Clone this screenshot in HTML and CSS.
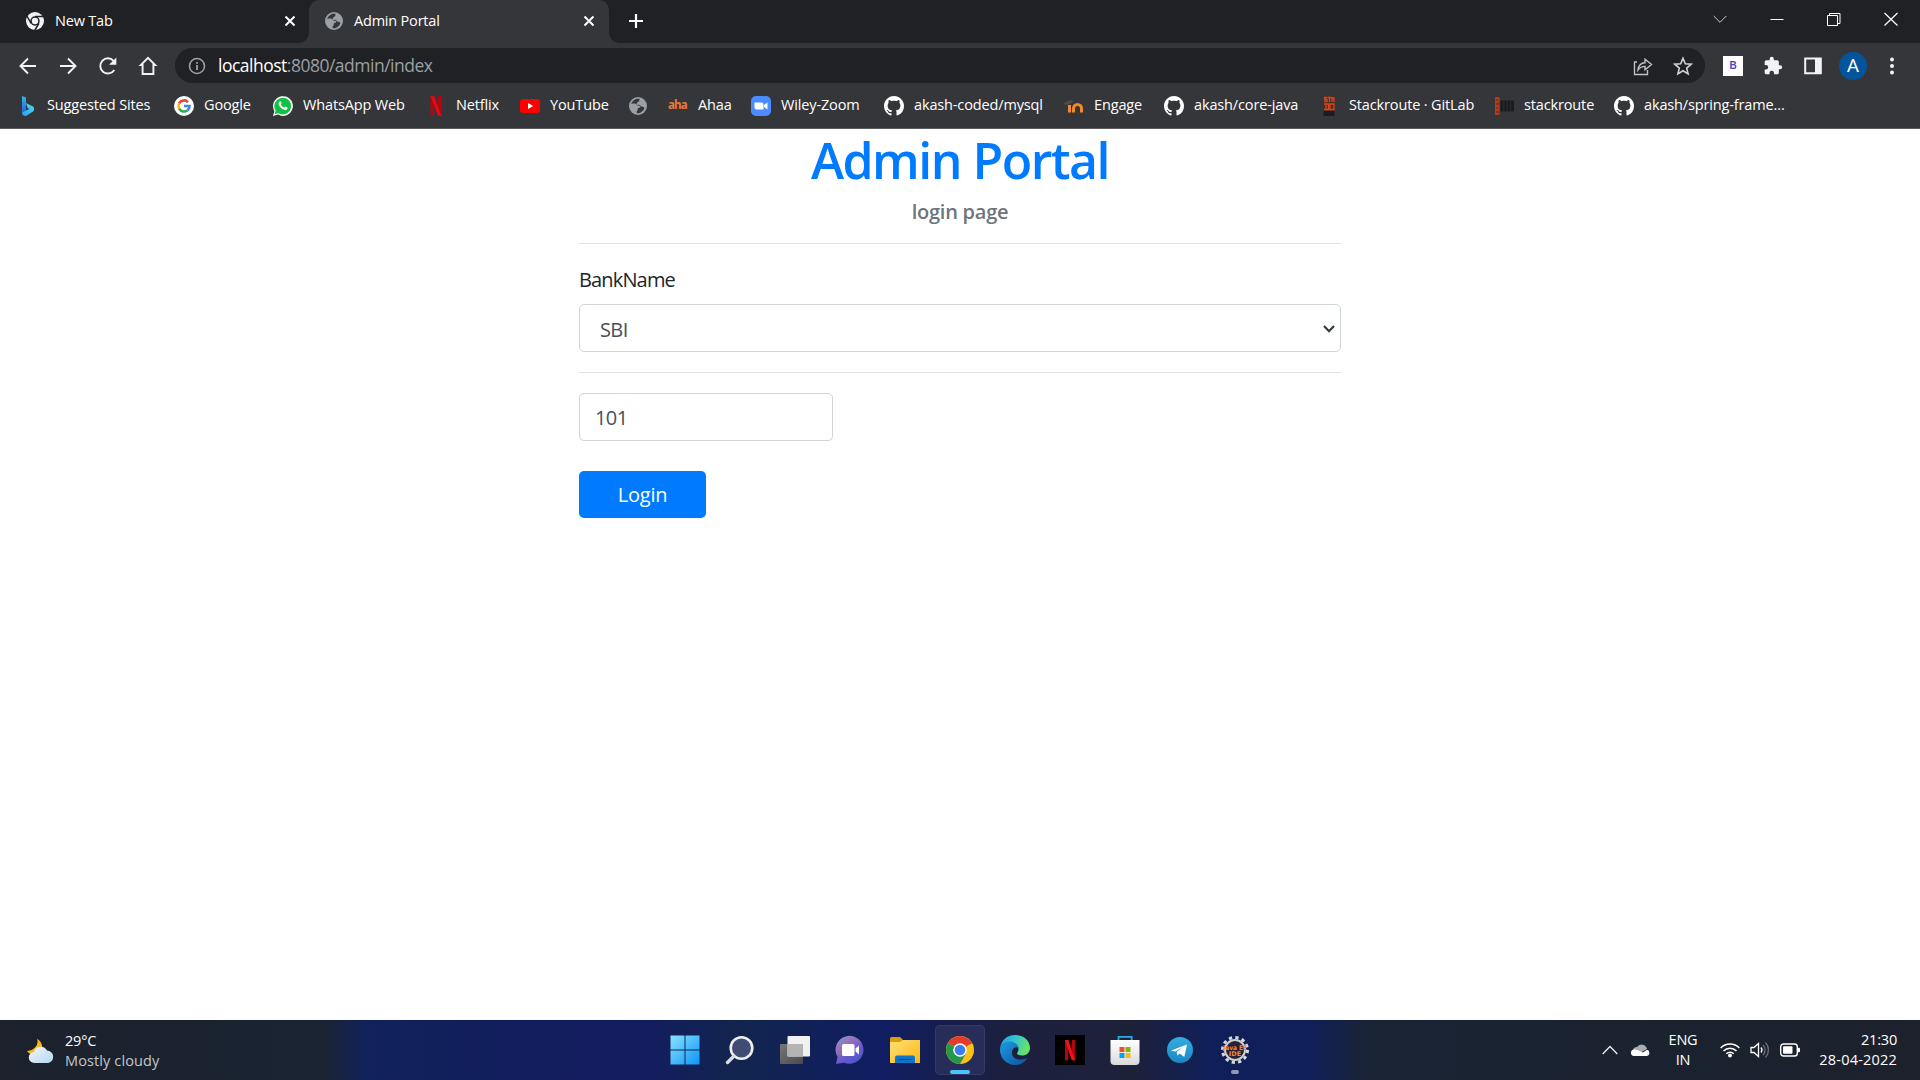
FILE: index.html
```html
<!DOCTYPE html>
<html lang="en">
<head>
<meta charset="utf-8">
<title>Admin Portal</title>
<link rel="stylesheet" href="styles.css">
</head>
<body>
<svg width="0" height="0" class="defs">
  <defs>
    <symbol id="github" viewBox="0 0 16 16"><path fill="#fff" d="M8 0C3.58 0 0 3.58 0 8c0 3.54 2.29 6.53 5.47 7.59.4.07.55-.17.55-.38 0-.19-.01-.82-.01-1.49-2.01.37-2.53-.49-2.69-.94-.09-.23-.48-.94-.82-1.13-.28-.15-.68-.52-.01-.53.63-.01 1.08.58 1.23.82.72 1.21 1.87.87 2.33.66.07-.52.28-.87.51-1.07-1.78-.2-3.64-.89-3.64-3.95 0-.87.31-1.59.82-2.15-.08-.2-.36-1.02.08-2.12 0 0 .67-.21 2.2.82.64-.18 1.32-.27 2-.27s1.36.09 2 .27c1.53-1.04 2.2-.82 2.2-.82.44 1.1.16 1.92.08 2.12.51.56.82 1.27.82 2.15 0 3.07-1.87 3.75-3.65 3.95.29.25.54.73.54 1.48 0 1.07-.01 1.93-.01 2.2 0 .21.15.46.55.38A8.01 8.01 0 0 0 16 8c0-4.42-3.58-8-8-8z"/></symbol>
    <symbol id="globe" viewBox="0 0 20 20"><circle cx="10" cy="10" r="9" fill="#9aa0a6"/><path fill="#35363a" d="M11.5 2.8C8 2.2 4.300 4.400 3.200 7.700c1.500.2 2.800-.5 4.300.1 1.200.5 1.300 1.700 2.700 1.900.9.1 1.800 0 2.100.8.2 1-.8 1.300-1.800 1.400-.8.100-.7 1.200-.9 2.100-.1.900-.9 1.100-1 2.100 0 .5.100.9.4 1.200 3.300.1 6.500-2.300 7.400-5.400-.8-.600-1.500-1.200-2.500-1.300-1.100-.200-1.300-1.400-2.400-1.700-1-.2-2.300.4-2.800-.6-.4-1 .4-1.700 1.300-2.200 1-.6 1.700-1.800 1.500-3.300z"/></symbol>
    <symbol id="close" viewBox="0 0 12 12"><path d="M1.500 1.500l9 9M10.500 1.500l-9 9" stroke="#fff" stroke-width="2" fill="none"/></symbol>
    <linearGradient id="bing" x1="0" y1="0" x2="0" y2="1"><stop offset="0" stop-color="#2fb7f4"/><stop offset="1" stop-color="#1b62e0"/></linearGradient>
    <linearGradient id="bing2" x1="0" y1="1" x2="1" y2="0"><stop offset="0" stop-color="#2a9bf0"/><stop offset="1" stop-color="#4be3e8"/></linearGradient>
    <linearGradient id="win" gradientUnits="userSpaceOnUse" x1="0" y1="0" x2="30" y2="30"><stop offset="0" stop-color="#8be4ff"/><stop offset="1" stop-color="#0a93f8"/></linearGradient>
    <linearGradient id="chat" x1="0" y1="0" x2=".7" y2="1"><stop offset="0" stop-color="#6fa0dc"/><stop offset=".35" stop-color="#9a73b8"/><stop offset=".7" stop-color="#6259cc"/><stop offset="1" stop-color="#5058c8"/></linearGradient>
    <linearGradient id="folder" x1="0" y1="0" x2="1" y2="1"><stop offset="0" stop-color="#ffe07a"/><stop offset="1" stop-color="#fbb80f"/></linearGradient>
    <linearGradient id="edgeTop" x1="0" y1="0" x2="1" y2=".3"><stop offset="0" stop-color="#1c9ee0"/><stop offset=".5" stop-color="#32c3d8"/><stop offset="1" stop-color="#66e26a"/></linearGradient>
    <linearGradient id="edgeLow" x1="0" y1="0" x2="1" y2="1"><stop offset="0" stop-color="#1b9de2"/><stop offset="1" stop-color="#0f4f9e"/></linearGradient>
    <linearGradient id="bag" x1="0" y1="0" x2="0" y2="1"><stop offset="0" stop-color="#fff"/><stop offset="1" stop-color="#d9dadc"/></linearGradient>
    <linearGradient id="tele" x1="0" y1="0" x2="0" y2="1"><stop offset="0" stop-color="#35ade1"/><stop offset="1" stop-color="#1b87c4"/></linearGradient>
    <linearGradient id="cloud" x1="0" y1="0" x2="1" y2="1"><stop offset="0" stop-color="#f3f8fd"/><stop offset="1" stop-color="#b4d6ee"/></linearGradient>
    <linearGradient id="grey" x1="0" y1="0" x2="1" y2="1"><stop offset="0" stop-color="#777"/><stop offset="1" stop-color="#4a4a4a"/></linearGradient>
  </defs>
</svg>

<header class="tabs">
  <div class="tab">
    <svg class="fav" viewBox="0 0 20 20"><circle cx="10" cy="10" r="9" fill="#f1f3f4"/><circle cx="10" cy="10" r="4.700" fill="#202124"/><circle cx="10" cy="10" r="3.200" fill="#f1f3f4"/><path d="M10 5.500h8.500M6.100 12.300L1.900 5M13.900 12.300L9.700 19.500" stroke="#202124" stroke-width="1.500"/></svg>
    <span class="tab-title">New Tab</span>
    <svg class="x"><use href="#close"/></svg>
  </div>
  <div class="tab active">
    <svg class="fav"><use href="#globe"/></svg>
    <span class="tab-title">Admin Portal</span>
    <svg class="x"><use href="#close"/></svg>
  </div>
  <svg class="plus" viewBox="0 0 16 16"><path d="M8 1v14M1 8h14" stroke="#fff" stroke-width="2.200"/></svg>
  <div class="window-buttons">
    <svg viewBox="0 0 14 14"><path d="M.7 4l6.300 6.300L13.300 4" stroke="#ccc" fill="none"/></svg>
    <svg viewBox="0 0 14 14"><path d="M.5 7.500h13" stroke="#fff" fill="none"/></svg>
    <svg viewBox="0 0 14 14"><path d="M.5 3.500h10v10H.5zM2.500 3V1.500h10.500v10H11" stroke="#fff" fill="none"/></svg>
    <svg viewBox="0 0 14 14"><path d="M.5 1l13 12.500M13.500 1L.5 13.500" stroke="#fff" stroke-width="1.200" fill="none"/></svg>
  </div>
</header>

<nav class="toolbar">
  <div class="nav-icons">
    <svg viewBox="0 0 20 20"><path d="M18 10H2.500M10 2.500L2.500 10l7.500 7.500" class="ln"/></svg>
    <svg viewBox="0 0 20 20"><path d="M2 10h15.500M10 2.500l7.500 7.500-7.500 7.500" class="ln"/></svg>
    <svg viewBox="0 0 20 20"><path d="M16.300 14A7.600 7.600 0 1 1 15.500 4.800L17 6.300" class="ln"/><path d="M18.300 1.500v7.200h-7.200z" fill="#f1f3f4"/></svg>
    <svg viewBox="0 0 20 20"><path d="M4.600 18V9H2.800L10 1.800 17.200 9h-1.800v9z" class="ln"/></svg>
  </div>
  <div class="omnibox">
    <svg class="info" viewBox="0 0 18 18"><circle cx="9" cy="9" r="7.500" fill="none" stroke="#9aa0a6" stroke-width="1.600"/><path d="M9 8v5M9 5v1.800" stroke="#9aa0a6" stroke-width="1.800"/></svg>
    <span class="url"><b>localhost</b>:8080/admin/index</span>
    <svg class="share" viewBox="0 0 20 20"><path d="M4 6H1.500v12.500h13V14M5 14c.5-4.500 3-7 7-7.200V3.200L18.500 8.500 12 13.700v-3.300c-3 0-5 1-7 3.600z" fill="none" stroke="#bdc1c6" stroke-width="1.400"/></svg>
    <svg class="star" viewBox="0 0 20 20"><path d="M10 2.200l2.300 5.500 6 .5-4.600 3.900 1.400 5.800L10 14.800l-5.100 3.100 1.400-5.800-4.600-3.900 6-.5z" fill="none" stroke="#d0d2d5" stroke-width="1.600"/></svg>
  </div>
  <div class="extensions">
    <span class="ext-b">B</span>
    <svg viewBox="0 0 24 24"><path fill="#f1f3f4" d="M20.500 11H19V7a2 2 0 0 0-2-2h-4V3.500a2.500 2.500 0 0 0-5 0V5H4a2 2 0 0 0-2 2v3.800h1.500a2.700 2.700 0 0 1 0 5.400H2V20a2 2 0 0 0 2 2h3.800v-1.500a2.700 2.700 0 0 1 5.400 0V22H17a2 2 0 0 0 2-2v-4h1.500a2.500 2.500 0 0 0 0-5z"/></svg>
    <svg viewBox="0 0 20 20"><path d="M2.200 2.500h15.600v14.800H2.200z" fill="none" stroke="#f1f3f4" stroke-width="2"/><path d="M12 2h6v15h-6z" fill="#f1f3f4"/></svg>
    <span class="avatar">A</span>
    <svg viewBox="0 0 20 20"><circle cx="10" cy="3.500" r="2" fill="#f1f3f4"/><circle cx="10" cy="10" r="2" fill="#f1f3f4"/><circle cx="10" cy="16.500" r="2" fill="#f1f3f4"/></svg>
  </div>
</nav>

<nav class="bookmarks">
  <a><svg viewBox="0 0 20 20"><path d="M4 0l4 1.500v13L4 17.500z" fill="url(#bing)"/><path d="M4 16.500l4-2 3.500-1.600-2-1L8 7l7 3.400q1 .6 1 2v1.400q0 1-1 1.700L8 20q-4 0-4-3.500z" fill="url(#bing2)"/></svg><span>Suggested Sites</span></a>
  <a><svg viewBox="0 0 20 20"><circle cx="10" cy="10" r="10" fill="#fff"/><g fill="none" stroke-width="2.600"><path d="M14 6.100A5.600 5.600 0 0 0 5.100 7.300" stroke="#ea4335"/><path d="M5.100 7.300a5.600 5.600 0 0 0 0 5.400" stroke="#fbbc05"/><path d="M5.100 12.700a5.600 5.600 0 0 0 8.500 1.500" stroke="#34a853"/><path d="M13.600 14.200A5.600 5.600 0 0 0 15.500 10H10" stroke="#4285f4"/></g></svg><span>Google</span></a>
  <a><svg viewBox="0 0 20 20"><path d="M0 20l1.400-5A9.900 9.900 0 1 1 5 18.600z" fill="#fff"/><path d="M1.700 18.300l1-3.500A8.400 8.400 0 1 1 5.300 17.300z" fill="#12c143"/><path d="M6.800 5.300c.5-.3 1-.2 1.200.3l.6 1.500c.1.500-.6 1-.7 1.400.8 1.500 1.800 2.500 3.400 3.100.5 0 .9-1.200 1.400-1.100l1.700.9c.7.700-.4 2.500-1.900 2.600-3.100-.2-6.600-3.700-6.900-6.300 0-1 .5-2 1.200-2.400z" fill="#fff"/></svg><span>WhatsApp Web</span></a>
  <a><svg viewBox="0 0 20 20"><path d="M4.500 0H8v20l-3.500.5zM12 0h3.500v20H12z" fill="#b1060f"/><path d="M4.500 0H8l7.500 20L12 19.700z" fill="#e50914"/></svg><span>Netflix</span></a>
  <a><svg viewBox="0 0 20 20"><rect y="3" width="20" height="14" rx="3.500" fill="#f00"/><path d="M8 7v6l5.200-3z" fill="#fff"/></svg><span>YouTube</span></a>
  <a><svg><use href="#globe"/></svg></a>
  <a><span class="aha">aha</span><span>Ahaa</span></a>
  <a><svg viewBox="0 0 20 20"><rect width="20" height="20" rx="5" fill="#4a8cff"/><path d="M3.500 6.500h7a2 2 0 0 1 2 2v5h-7a2 2 0 0 1-2-2zM13 9l3.500-2.500v7L13 11z" fill="#fff"/></svg><span>Wiley-Zoom</span></a>
  <a><svg><use href="#github"/></svg><span>akash-coded/mysql</span></a>
  <a><svg viewBox="0 0 20 20"><path d="M5.500 16.500V9M9.500 16.500v-4a3.600 3.600 0 0 1 8 0v4" stroke="#f08a2c" stroke-width="3" fill="none"/><path d="M0 7l6-3 4 1-4 3-5 1z" fill="#514b48"/></svg><span>Engage</span></a>
  <a><svg><use href="#github"/></svg><span>akash/core-java</span></a>
  <a><svg viewBox="0 0 20 20"><path d="M4.500 0h11v15h-11z" fill="#4a2b24"/><path d="M8 1.500H5.500v2H8v2H5M8.500 1.500h4M10.500 1.500v4.500M13 6V2h2v4M5 8h4.500v5.500H5M11 8h4v5.500h-4zM7 8v5" fill="none" stroke="#d9481c" stroke-width="1.300"/><path d="M4.500 15h11v5h-11z" fill="#1d1d1f"/></svg><span>Stackroute · GitLab</span></a>
  <a><svg viewBox="0 0 20 20"><path d="M1 1h4.500v18H1z" fill="#b63b19"/><path d="M2 4h2M2 8h3M2 12h2M2 16h3" stroke="#4a2b24"/><path d="M6.500 4.500h3v11h-3zM10.300 4.500h2.500v11h-2.500zM13.500 4.500h3v11h-3zM17.200 4.500H20v11h-2.800z" fill="#1b1b1d"/></svg><span>stackroute</span></a>
  <a><svg><use href="#github"/></svg><span>akash/spring-frame...</span></a>
</nav>

<main class="page">
  <form class="login">
    <h1>Admin Portal</h1>
    <h2>login page</h2>
    <hr>
    <label>BankName</label>
    <div class="control select"><span>SBI</span><svg viewBox="0 0 12 8"><path d="M1 1l5 5.200L11 1" fill="none" stroke="#343a40" stroke-width="2.200"/></svg></div>
    <hr class="second">
    <div class="control number"><span>101</span></div>
    <button type="button">Login</button>
  </form>
</main>

<footer class="taskbar">
  <div class="weather">
    <svg viewBox="0 0 28 26"><path d="M11 1c2 5-1.500 11-10 12 2.500 4.500 11 5 15-1C17 7 15 3 11 1z" fill="#f6b91a"/><path d="M8.500 25a5.500 5.500 0 0 1-.5-11 7 7 0 0 1 13-1.500A6.300 6.300 0 0 1 22 25z" fill="url(#cloud)"/></svg>
    <div><p class="temp">29°C</p><p class="sky">Mostly cloudy</p></div>
  </div>
  <div class="apps">
    <div class="app"><svg viewBox="0 0 30 30"><path d="M.5.500h14v14H.5zM15.500.500h14v14h-14zM.5 15.500h14v14H.5zM15.500 15.500h14v14h-14z" fill="url(#win)"/></svg></div>
    <div class="app"><svg viewBox="0 0 30 30"><circle cx="16.500" cy="13" r="10.800" fill="#414c74" stroke="#eee" stroke-width="2.600"/><path d="M9 21l-6.500 6.500" stroke="#ddd" stroke-width="3.400" stroke-linecap="round"/></svg></div>
    <div class="app"><svg viewBox="0 0 30 30"><rect y="9" width="23" height="20" rx="1" fill="url(#grey)"/><rect x="7.500" y="1" width="22.500" height="20.500" rx="1" fill="#f1f1f1"/><path d="M7.500 9H23v12.500H7.500z" fill="#b4b4b4"/></svg></div>
    <div class="app"><svg viewBox="0 0 30 30"><path d="M1 29l1.500-7A14 14 0 1 1 9 27.700z" fill="url(#chat)"/><rect x="7" y="9" width="12.500" height="12" rx="1.500" fill="#fff"/><path d="M20.500 13.500l3.500-3v9l-3.500-3z" fill="#fff"/></svg></div>
    <div class="app"><svg viewBox="0 0 30 30"><path d="M0 3.500Q0 2 1.500 2H10l3 3v5H0z" fill="#e09c00"/><path d="M0 7h10l3-2h17v23H0z" fill="url(#folder)"/><path d="M5 28v-5.500q0-2 2-2h16q2 0 2 2V28z" fill="#0e75c8"/><path d="M8.500 24.500h13" stroke="#084a8c"/></svg></div>
    <div class="app current"><svg viewBox="0 0 30 30"><circle cx="15" cy="15" r="14" fill="#fbc116"/><path d="M15 15L2.900 8A14 14 0 0 1 27.100 8z" fill="#e33b2e"/><path d="M15 15L2.900 8A14 14 0 0 0 15 29l6-10.500z" fill="#23974a"/><path d="M15 8.500h12.400L27 8 15 5z" fill="#e33b2e"/><circle cx="15" cy="15" r="6.800" fill="#fff"/><circle cx="15" cy="15" r="5.300" fill="#3a7df0"/></svg></div>
    <div class="app"><svg viewBox="0 0 30 30"><path d="M0 14C1 5 7 0 15 0c9 0 15 6 15 13 0 5-4 7.500-8 7.500-3.500 0-5-1.200-5-2.200 0-.8 1.500-1.500 1.500-4C18.500 10 14 7 9 7 4 7 1 10 0 14z" fill="url(#edgeTop)"/><path d="M0 14c1-5 5-7.500 9.500-7.500 5 0 9 3 9 6.500-1-1.500-6-1-6.500 4-.5 6 6 10 15.500 6C24 28 20 30 15 30 6 30-.5 22.500 0 14z" fill="url(#edgeLow)"/></svg></div>
    <div class="app"><svg viewBox="0 0 30 30"><path d="M0 0h30v30H0z" fill="#000"/><path d="M10 5h3.300v20L10 25.500zM16.700 5H20v20.500l-3.300-.5z" fill="#b1060f"/><path d="M10 5h3.300L20 25.500l-3.300-.5z" fill="#f0131e"/></svg></div>
    <div class="app"><svg viewBox="0 0 30 30"><path d="M8.500 6V1.800h13.200V6" fill="none" stroke="#25a9e6" stroke-width="1.800"/><path d="M.5 5h29v21q0 4-4 4h-21q-4 0-4-4z" fill="url(#bag)"/><path d="M9.500 12h5v5h-5z" fill="#f25022"/><path d="M15.500 12h5v5h-5z" fill="#7fba00"/><path d="M9.500 18h5v5h-5z" fill="#00a4ef"/><path d="M15.500 18h5v5h-5z" fill="#ffb900"/></svg></div>
    <div class="app"><svg viewBox="0 0 30 30"><circle cx="15" cy="15" r="13" fill="url(#tele)"/><path d="M6 15.500L22 9.500l-2.700 12.500-4.600-3.400-2.200 2-.8-3.600 6-5-7.200 4.600z" fill="#fff"/></svg></div>
    <div class="app running"><svg viewBox="0 0 30 30"><circle cx="15" cy="15" r="12.500" fill="none" stroke="#d9d9d9" stroke-width="3" stroke-dasharray="3.270 3.270"/><circle cx="15" cy="15" r="10" fill="#262238" stroke="#d0d0d0" stroke-width="2"/><text x="15" y="14.500" class="jee" textLength="24" lengthAdjust="spacingAndGlyphs">Java EE</text><text x="15" y="21" class="jee">IDE</text></svg></div>
  </div>
  <div class="tray">
    <svg class="up" viewBox="0 0 16 10"><path d="M.7 9L8 1.500 15.300 9" fill="none" stroke="#eee" stroke-width="1.300"/></svg>
    <svg class="drive" viewBox="0 0 20 14"><path d="M3 7a4 4 0 0 1 4-3 5.500 5.500 0 0 1 10 2l-7 4z" fill="#a9abb0"/><path d="M3.500 13A3.300 3.300 0 0 1 4 6.500q2-.5 4.500 1L13 9.500l4-2.700a3.200 3.200 0 0 1 0 6.200z" fill="#fff"/></svg>
    <div class="lang"><p>ENG</p><p>IN</p></div>
    <svg class="wifi" viewBox="0 0 20 16"><g fill="none" stroke="#fff" stroke-width="1.500"><path d="M.7 6a13 13 0 0 1 18.600 0M3.500 9a9 9 0 0 1 13 0M6.300 11.700a5.200 5.200 0 0 1 7.400 0"/></g><circle cx="10" cy="13.500" r="2" fill="#fff"/></svg>
    <svg class="sound" viewBox="0 0 20 18"><path d="M1 6.500h3L8.500 2.500v13L4 11.500H1z" fill="none" stroke="#fff" stroke-width="1.300"/><path d="M11 6.500a4 4 0 0 1 0 5" fill="none" stroke="#fff" stroke-width="1.300"/><path d="M13 4a7 7 0 0 1 0 10M15.500 1.500a11 11 0 0 1 0 15" fill="none" stroke="#6b7078" stroke-width="1.300"/></svg>
    <svg class="battery" viewBox="0 0 20 14"><rect x=".7" y="1" width="16.600" height="12" rx="2.800" fill="none" stroke="#fff" stroke-width="1.400"/><rect x="3" y="3.300" width="9.500" height="7.500" rx="1" fill="#fff"/><path d="M18 4.800h1q1 0 1 1v2.500q0 1-1 1h-1z" fill="#fff"/></svg>
    <div class="clock"><p>21:30</p><p class="date">28-04-2022</p></div>
  </div>
</footer>
</body>
</html>
```
FILE: styles.css
```css
* { box-sizing: border-box; }
html, body { height: 100%; }
body {
  margin: 0;
  display: flex;
  flex-direction: column;
  overflow: hidden;
  font-family: "Open Sans", "Noto Sans", sans-serif;
  background: #fff;
}
p { margin: 0; }
svg { display: block; flex: none; }
span { white-space: nowrap; }
.defs { position: absolute; }

/* tab strip */
.tabs { height: 43px; background: #202124; display: flex; align-items: center; color: #fff; flex: none; }
.tab { width: 300px; height: 43px; display: flex; align-items: center; padding: 0 14px 1px 15px; }
.tab:first-child { width: 309px; padding-left: 25px; padding-right: 13px; }
.tab.active { background: #35363a; border-radius: 10px 10px 0 0; position: relative; }
.tab.active::before, .tab.active::after {
  content: ""; position: absolute; bottom: 0; width: 10px; height: 10px;
}
.tab.active::before { left: -10px; background: radial-gradient(circle at 0 0, transparent 9.5px, #35363a 10px); }
.tab.active::after { right: -10px; background: radial-gradient(circle at 100% 0, transparent 9.5px, #35363a 10px); }
.fav { width: 20px; height: 20px; }
.tab-title { font-size: 14.5px; margin-left: 10px; flex: 1; letter-spacing: -.2px; padding-bottom: 2px; }
.x { width: 12px; height: 12px; }
.plus { width: 16px; height: 16px; margin: 0 0 1px 19px; }
.window-buttons { margin-left: auto; display: flex; gap: 43px; padding: 0 22px 6px 0; }
.window-buttons svg { width: 14px; height: 14px; }

/* toolbar */
.toolbar { height: 45px; background: #35363a; display: flex; align-items: center; flex: none; }
.nav-icons { display: flex; gap: 20px; padding-left: 18px; width: 175px; }
.nav-icons svg { width: 20px; height: 20px; }
.ln { fill: none; stroke: #f1f3f4; stroke-width: 1.900; }
.omnibox {
  width: 1530px; height: 35px; border-radius: 18px; background: #202124;
  display: flex; align-items: center; padding: 0 12px 0 13px;
}
.info { width: 18px; height: 18px; }
.url { flex: 1; margin-left: 12px; color: #9aa0a6; font-size: 17.5px; letter-spacing: -.5px; padding-bottom: 1px; }
.url b { color: #fff; font-weight: 400; }
.share { width: 20px; height: 20px; margin-right: 20px; }
.star { width: 20px; height: 20px; }
.extensions { display: flex; align-items: center; padding-left: 18px; }
.extensions svg { width: 20px; height: 20px; }
.ext-b { width: 20px; height: 20px; margin-right: 20px; background: #fff; color: #4a46c0; font: 700 10px/20px "Liberation Sans", sans-serif; text-align: center; }
.extensions svg + svg { margin-left: 20px; }
.avatar { width: 28px; height: 28px; border-radius: 50%; background: #04549c; color: #fff; font: 19px/28px Roboto, sans-serif; text-align: center; margin: 0 15px 0 16px; }

/* bookmarks */
.bookmarks {
  height: 41px; background: #35363a; border-bottom: 1px solid #5b5c60; flex: none;
  display: grid; padding: 0 0 4px 18px; align-items: center;
  grid-template-columns: 156px 99px 153px 94px 108px 40px 83px 133px 180px 100px 155px 175px 120px 180px;
  color: #fff; font-size: 14.5px; letter-spacing: -.14px;
}
.bookmarks a { display: flex; align-items: center; gap: 10px; }
.bookmarks a:first-child { gap: 9px; }
.bookmarks svg { width: 20px; height: 20px; }
.bookmarks span { line-height: 18px; padding-bottom: 2px; }
.bookmarks .aha { width: 20px; color: #ee7b34; font: 700 11.5px/20px "Open Sans", sans-serif; letter-spacing: -.9px; }

/* page */
.page { flex: 1; background: #fff; display: flex; justify-content: center; }
.login { width: 762px; display: flex; flex-direction: column; align-items: stretch; color: #212529; }
h1 { margin: 0; font-size: 50px; line-height: 60px; font-weight: 600; color: #007bff; text-align: center; padding-top: 1px; letter-spacing: -1.5px; }
h2 { margin: 10px 0 1px; font-size: 20px; line-height: 24px; font-weight: 600; color: #6c757d; text-align: center; letter-spacing: -.25px; }
hr { width: 100%; height: 1px; border: 0; margin: 18px 0 0; background: #e2e2e2; flex: none; }
label { font-size: 20px; line-height: 30px; margin-top: 21px; letter-spacing: -.85px; }
.control {
  height: 48px; border: 1px solid #ced4da; border-radius: 5px; color: #495057; font-size: 20px;
  display: flex; align-items: center; justify-content: space-between; letter-spacing: -.6px;
}
.select { margin-top: 9px; padding: 2px 5px 0 20px; }
.select svg { width: 12px; height: 8px; }
.second { margin-top: 20px; }
.number { width: 254px; margin-top: 20px; padding: 0 15px; }
button {
  width: 127px; height: 47px; margin-top: 30px; border: 0; border-radius: 5px; padding: 0;
  background: #007bff; color: #fff; font: 20px "Open Sans", sans-serif; letter-spacing: -.25px;
}

/* taskbar */
.taskbar {
  height: 60px; flex: none; display: grid; grid-template-columns: 660px 604px 1fr; color: #fff;
  background: linear-gradient(90deg, #1c212c 0, #1a2433 325px, #12225a 365px, #111e5c 480px, #141c60 640px, #12254e 740px, #101d62 880px, #1c2040 1000px, #1d2138 1130px, #101f5a 1210px, #101f58 1310px, #1a2434 1370px, #1c212c 1920px);
}
.weather { display: flex; align-items: center; padding-left: 26px; gap: 11px; font-size: 14.5px; line-height: 20px; letter-spacing: -.2px; padding-top: 1px; }
.weather svg { width: 28px; height: 26px; }
.sky { color: #c3c6ca; letter-spacing: .12px; }
.apps { display: flex; align-items: center; gap: 5px; }
.app { width: 50px; height: 50px; border-radius: 5px; display: flex; align-items: center; justify-content: center; position: relative; }
.app svg { width: 30px; height: 30px; }
.current { background: #272d58; box-shadow: inset 0 0 0 1px #343a62; }
.current::after, .running::after { content: ""; position: absolute; bottom: 1px; left: 15px; width: 20px; height: 4px; border-radius: 2px; background: #4cc2ff; }
.running::after { left: 21px; width: 8px; background: #9398ae; }
.jee { font: 700 6.500px "DejaVu Sans", sans-serif; fill: #f08a24; text-anchor: middle; }
.tray { display: flex; align-items: center; justify-content: flex-end; padding-right: 23px; font-size: 14.5px; line-height: 20px; letter-spacing: -.2px; }
.up { width: 16px; height: 10px; margin-right: 12px; }
.drive { width: 20px; height: 14px; margin-right: 18px; }
.lang { width: 30px; text-align: center; margin-right: 22px; }
.wifi { width: 20px; height: 16px; margin-right: 10px; }
.sound { width: 20px; height: 18px; margin-right: 10px; }
.battery { width: 20px; height: 14px; margin-right: 19px; }
.clock { width: 78px; text-align: right; }
.date { letter-spacing: .2px; }
```
